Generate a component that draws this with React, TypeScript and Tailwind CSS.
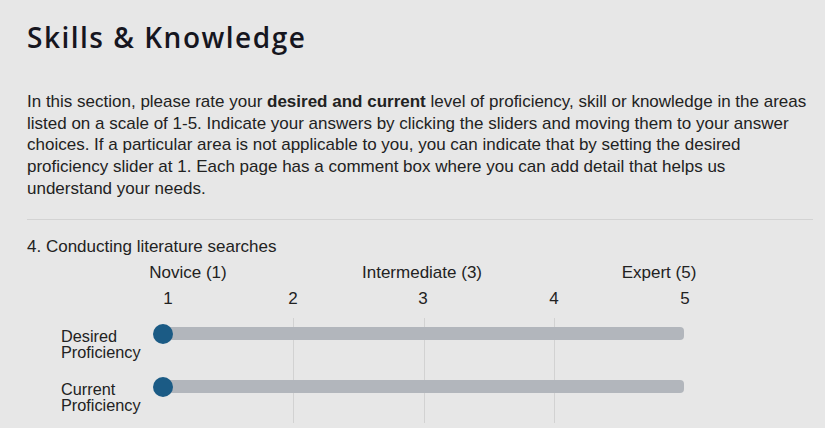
import { JSX } from 'react';

const tickMargins: string[] = ['ml-[131px]', 'ml-[105px]', 'ml-[110px]', 'ml-[111px]', 'ml-[111px]'];

const SliderRow = ({ label }: { label: string[] }): JSX.Element => (
  <div className="flex items-start h-[53px]">
    <div className="w-[92px] pt-[4px] text-[16.3px] leading-[16.5px] text-[#222]">
      {label.map((line: string) => (
        <div key={line}>{line}</div>
      ))}
    </div>
    <div className="relative w-[532px] h-[20px] flex items-center">
      <div className="ml-[10px] w-[521px] h-[13px] rounded-[4px] bg-[#b2b6bc]" />
      <div className="absolute left-0 top-0 w-[20px] h-[20px] rounded-full bg-[#1b5b85]" />
    </div>
  </div>
);

const App = (): JSX.Element => {
  return (
    <div className="w-[825px] h-[428px] overflow-hidden bg-[#e7e7e7] text-[#222] font-['Liberation_Sans',Arial,sans-serif]">
      <div className="pl-[27px] pr-[12px]">
        <h1 className="pt-[19px] text-[28px] leading-[36px] font-semibold text-[#16161f] font-['Open_Sans',sans-serif] tracking-[1.5px]">
          Skills &amp; Knowledge
        </h1>

        <p className="mt-[36px] w-[790px] text-[17px] leading-[21.7px]">
          In this section, please rate your <b>desired and current</b> level of proficiency, skill or
          knowledge in the areas
          <br />
          listed on a scale of 1-5. Indicate your answers by clicking the sliders and moving them to
          your answer
          <br />
          choices. If a particular area is not applicable to you, you can indicate that by setting the
          desired
          <br />
          proficiency slider at 1. Each page has a comment box where you can add detail that helps us
          <br />
          understand your needs.
        </p>

        <div className="mt-[19px] w-[786px] border-t border-[#d3d3d3]" />

        <div className="mt-[17px] text-[17px] leading-[20px]">
          4. Conducting literature searches
        </div>

        <div className="flex text-[17px] leading-[20px] mt-[6px]">
          <div className="ml-[111px] w-[100px] text-center">Novice (1)</div>
          <div className="ml-[109px] w-[150px] text-center">Intermediate (3)</div>
          <div className="ml-[107px] w-[110px] text-center">Expert (5)</div>
        </div>

        <div className="flex mt-[6px] text-[17px] leading-[20px]">
          {tickMargins.map((m: string, i: number) => (
            <div key={m + i} className={`${m} w-[20px] text-center`}>
              {i + 1}
            </div>
          ))}
        </div>

        <div className="relative mt-[9px] ml-[34px]">
          <div className="absolute left-[102px] top-0 h-[105px] w-[521px] grid grid-cols-4">
            <div />
            <div className="border-l border-[#d2d2d2]" />
            <div className="border-l border-[#d2d2d2]" />
            <div className="border-l border-[#d2d2d2]" />
          </div>
          <div className="relative pt-[6px]">
            <SliderRow label={['Desired', 'Proficiency']} />
            <SliderRow label={['Current', 'Proficiency']} />
          </div>
        </div>
      </div>
    </div>
  );
};

export default App;
